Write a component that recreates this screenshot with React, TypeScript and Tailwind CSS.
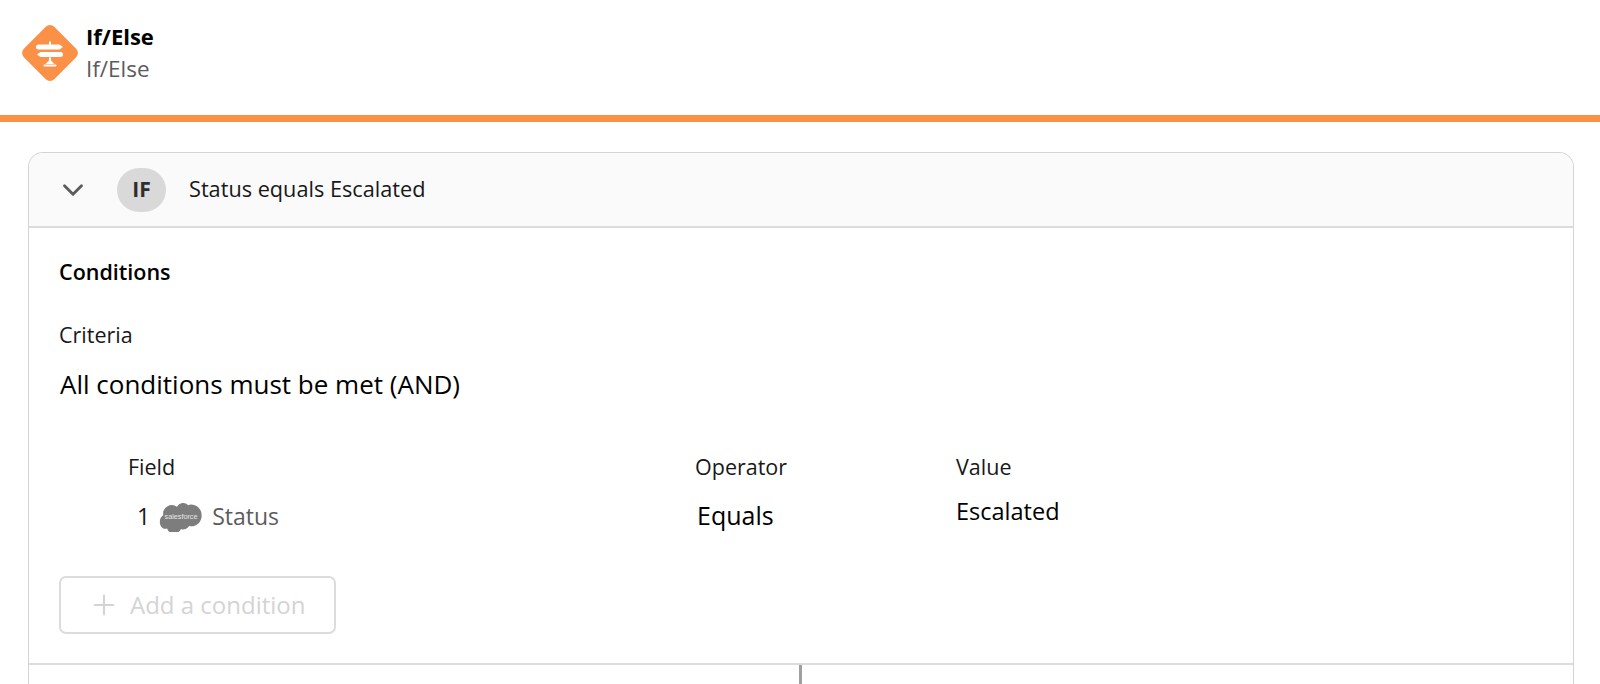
import { ChevronDown, Plus } from "lucide-react";

function IfElseIcon() {
  return (
    <svg width="58" height="58" viewBox="0 0 58 58">
      <rect x="7.500" y="7.500" width="43" height="43" rx="6" fill="#fb9147" transform="rotate(45 29 29)" />
      <path d="M28 17.500h2v3h8.500l3.500 2.500-3.500 2.500H17.500a2.500 2.500 0 0 1 0-5H28z" fill="#fff" />
      <path d="M19.500 28H39.500a2.500 2.500 0 0 1 0 5H19.500l-3.500-2.500z" fill="#fff" />
      <path d="M28 33.500h2v3l3.500 3.500h-9l3.500-3.500z" fill="#fff" />
      <rect x="22.500" y="40.500" width="13" height="2" rx="1" fill="#fff" />
    </svg>
  );
}

function SalesforceCloud() {
  return (
    <svg width="44" height="31" viewBox="0 0 42 30">
      <path
        d="M17 5.500a7 7 0 0 1 11-1.500 8 8 0 0 1 3-.500c5.500 0 10 4.500 10 10.500s-4.500 10.500-10 10.500c-.8 0-1.500-.1-2.200-.2a6 6 0 0 1-7.800 2.700 7.300 7.300 0 0 1-13.500-.4c-.6.100-1.100.2-1.700.2C2.800 27 .5 23.800.5 20c0-2.700 1.300-5 3.300-6.200A8.500 8.500 0 0 1 17 5.500z"
        fill="#7d7d7d"
      />
      <text x="21" y="17.500" textAnchor="middle" fontSize="7" fill="#e8e8e8" fontFamily="'Liberation Sans', sans-serif">
        salesforce
      </text>
    </svg>
  );
}

export default function App() {
  return (
    <div className="h-[684px] overflow-hidden bg-white text-[#181818] font-['Open_Sans','Noto_Sans',sans-serif]">
      {/* Element header */}
      <div className="h-[115px] flex items-start pl-[21px] pt-[24px] gap-[7px]">
        <IfElseIcon />
        <div>
          <div className="text-[22px] leading-[24px] font-bold text-black">If/Else</div>
          <div className="mt-[9px] text-[22.500px] leading-[24px] text-[#5c5c5c]">If/Else</div>
        </div>
      </div>
      <div className="h-[7px] bg-[#fb9147]" />

      {/* Outcome card */}
      <div className="mt-[30px] ml-[28px] mr-[26px] border border-[#d4d4d4] rounded-t-[15px] border-b-0 h-[600px]">
        <div className="h-[75px] flex items-center bg-[#fafafa] border-b-2 border-[#dcdcdc] rounded-t-[15px] pl-[27px]">
          <ChevronDown size={34} strokeWidth={2} className="text-[#5c5c5c]" />
          <div className="ml-[27px] w-[49px] h-[44px] rounded-full bg-[#d9d9d9] flex items-center justify-center text-[21px] font-bold text-[#2e2e2e]">
            IF
          </div>
          <div className="ml-[23px] text-[21.700px] text-[#181818]">Status equals Escalated</div>
        </div>

        <div className="h-[437px] pl-[30px] border-b-2 border-[#dcdcdc]">
          <div className="pt-[31px] text-[21.500px] leading-[26px] font-semibold text-black">Conditions</div>
          <div className="mt-[37px] text-[21.500px] leading-[26px]">Criteria</div>
          <div className="mt-[21px] ml-[1px] text-[26px] leading-[30px] text-black">All conditions must be met (AND)</div>

          <div className="mt-[55px] ml-[69px] grid grid-cols-[567px_261px_1fr] text-[21.500px] leading-[26px]">
            <div>Field</div>
            <div>Operator</div>
            <div>Value</div>
          </div>
          <div className="mt-[18px] ml-[69px] grid grid-cols-[567px_261px_1fr] items-start">
            <div className="flex items-center h-[36px] pl-[9px]">
              <span className="text-[23px]">1</span>
              <span className="ml-[9px]"><SalesforceCloud /></span>
              <span className="ml-[9px] text-[23px] text-[#5c5c5c]">Status</span>
            </div>
            <div className="h-[36px] pl-[2px] flex items-center text-[25px] text-black">Equals</div>
            <div className="pt-[1px] h-[26px] flex items-center text-[23.500px] text-black">Escalated</div>
          </div>

          <div className="mt-[42px] w-[277px] h-[58px] border-2 border-[#dcdcdc] rounded-[7px] flex items-center pl-[27px] gap-[10px] text-[#d4d4d4]">
            <Plus size={32} strokeWidth={1.600} />
            <span className="text-[24px]">Add a condition</span>
          </div>
        </div>

        {/* Branch columns below the fold */}
        <div className="grid grid-cols-2 h-[80px]">
          <div className="border-r-[3px] border-[#a0a0a0] -mr-[1px]" />
          <div />
        </div>
      </div>
    </div>
  );
}
